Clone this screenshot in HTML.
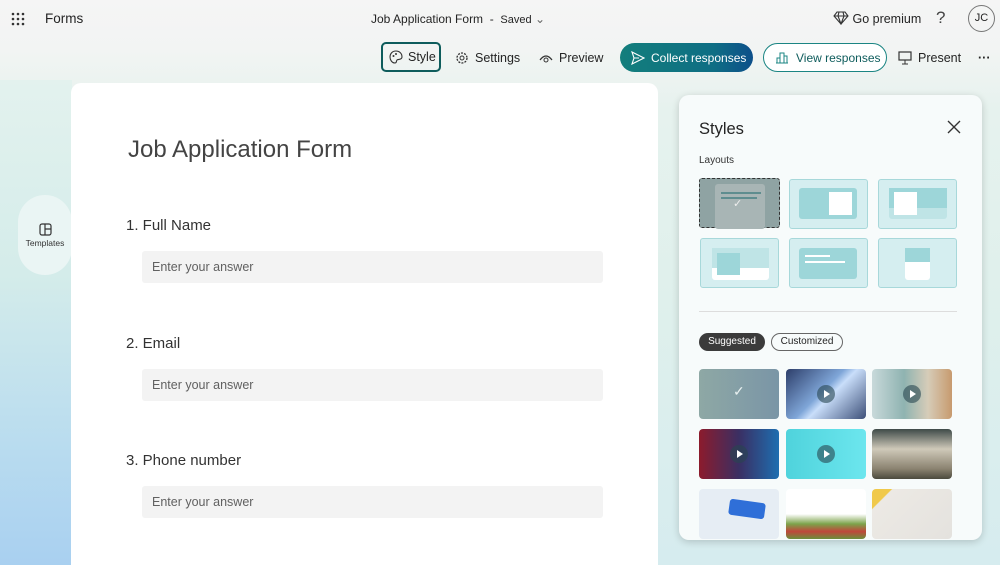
<!DOCTYPE html>
<html><head><style>
*{box-sizing:border-box;margin:0;padding:0}
html,body{width:1000px;height:565px;overflow:hidden}
body{font-family:"Liberation Sans",sans-serif;color:#242424;position:relative;
background:linear-gradient(180deg,#f5f5f5 0px,#f2f4f3 50px,#e6f2ee 110px,#dff0ec 300px,#d6ecef 565px);}
.bgl{position:absolute;left:0;top:80px;width:72px;height:485px;background:linear-gradient(180deg,#e3f2ee 0%,#d4ecea 40%,#b9dcef 75%,#a9d0f0 100%)}
.abs{position:absolute}
.btn{position:absolute;top:43px;height:29px;display:flex;align-items:center;font-size:12.5px;color:#242424;white-space:nowrap}
.card{position:absolute;left:71px;top:83px;width:587px;height:482px;background:#fff;border-radius:10px 10px 0 0}
.q{position:absolute;left:55px;font-size:15px;color:#333}
.in{position:absolute;left:71px;width:461px;height:32px;background:#f3f3f3;border-radius:3px;font-size:12.5px;color:#616161;padding:9px 10px}
.panel{position:absolute;left:679px;top:95px;width:303px;height:445px;background:#f7fbfb;border-radius:10px;box-shadow:0 2px 8px rgba(0,0,0,.18);overflow:hidden}
.lay{position:absolute;width:79px;height:50px;background:#d5eef0;border:1px solid #a7d8da;border-radius:3px}
.img{position:absolute;width:80px;height:50px;border-radius:4px}
.play{position:absolute;left:31px;top:16px;width:18px;height:18px;border-radius:50%;background:rgba(40,70,80,.6)}
.play:after{content:"";position:absolute;left:7px;top:5px;border-left:6px solid #fff;border-top:4px solid transparent;border-bottom:4px solid transparent}
</style></head><body>
<div class="bgl"></div>
<svg class="abs" style="left:11px;top:12px" width="14" height="14"><g fill="#333"><circle cx="2" cy="2" r="1.3"/><circle cx="7" cy="2" r="1.3"/><circle cx="12" cy="2" r="1.3"/><circle cx="2" cy="7" r="1.3"/><circle cx="7" cy="7" r="1.3"/><circle cx="12" cy="7" r="1.3"/><circle cx="2" cy="12" r="1.3"/><circle cx="7" cy="12" r="1.3"/><circle cx="12" cy="12" r="1.3"/></g></svg>
<div class="abs" style="left:45px;top:11px;font-size:13.5px">Forms</div>
<div class="abs" style="left:371px;top:12px;font-size:12px;white-space:nowrap">Job Application Form &nbsp;- &nbsp;<span style="font-size:11px">Saved</span> <span style="color:#666">&#8964;</span></div>
<div class="abs" style="left:833px;top:11px;font-size:12.5px;white-space:nowrap"><svg width="16" height="14" style="vertical-align:-2px"><path d="M4 1H12L15 5L8 13L1 5Z M1 5H15 M6 1L5 5L8 13L11 5L10 1" fill="none" stroke="#333" stroke-width="1.1"/></svg> Go premium</div>
<div class="abs" style="left:936px;top:8px;font-size:17px;color:#444">?</div>
<div class="abs" style="left:968px;top:5px;width:27px;height:27px;border:1px solid #777;border-radius:50%;font-size:11px;text-align:center;line-height:25px">JC</div>

<div class="btn" style="left:381px;top:42px;width:60px;height:30px;border:2.5px solid #0e5c5c;border-radius:5px;padding-left:6px"><svg width="14" height="14" style="margin-right:5px"><path d="M7 1C3 1 1 4 1 7C1 10 3 13 6 13C8 13 7 11 8 10C9 9 13 10 13 7C13 3 10 1 7 1Z" fill="none" stroke="#333" stroke-width="1.1"/><circle cx="4.5" cy="6" r="1" fill="#333"/><circle cx="7" cy="4" r="1" fill="#333"/></svg>Style</div>
<div class="btn" style="left:455px"><svg width="14" height="14" style="margin-right:6px"><circle cx="7" cy="7" r="5" fill="none" stroke="#333" stroke-width="1.3" stroke-dasharray="2 1.2"/><circle cx="7" cy="7" r="2" fill="none" stroke="#333"/></svg>Settings</div>
<div class="btn" style="left:539px"><svg width="14" height="12" style="margin-right:6px"><path d="M1 8Q7 0 13 8" fill="none" stroke="#333" stroke-width="1.2"/><circle cx="7" cy="8" r="2" fill="none" stroke="#333"/></svg>Preview</div>
<div class="btn" style="left:620px;width:133px;background:linear-gradient(90deg,#137e7c,#0e6e84 70%,#0d4f8a);border-radius:15px;color:#fff;padding-left:11px;font-size:12px"><svg width="14" height="14" style="margin-right:6px;flex:none"><path d="M1 1L13 7L1 13L3 7Z M3 7H8" fill="none" stroke="#fff" stroke-width="1.1"/></svg>Collect responses</div>
<div class="btn" style="left:763px;width:124px;border:1px solid #1b8583;border-radius:15px;color:#0e5c5c;padding-left:12px;background:#fff;font-size:12px"><svg width="13" height="12" style="margin-right:7px;flex:none"><path d="M1 11V6H4V11M4 11V1H8V11M8 11V4H11V11M0 11H12" fill="none" stroke="#1b8583"/></svg>View responses</div>
<div class="btn" style="left:898px"><svg width="14" height="14" style="margin-right:6px"><rect x="1" y="1" width="12" height="8" fill="none" stroke="#333" stroke-width="1.2"/><path d="M7 9V13M4 13H10" stroke="#333"/></svg>Present</div>
<div class="btn" style="left:978px;font-weight:bold">&middot;&middot;&middot;</div>

<div class="abs" style="left:18px;top:195px;width:54px;height:80px;border-radius:27px;background:#eaf5f4;font-size:8.5px;text-align:center;padding-top:28px;color:#333"><svg width="13" height="13"><rect x="1" y="1" width="11" height="11" rx="2" fill="none" stroke="#333" stroke-width="1.2"/><path d="M6 1V12M6 6H12" stroke="#333" stroke-width="1.2"/></svg><br>Templates</div>

<div class="card">
<div class="abs" style="left:57px;top:53px;font-size:24px;color:#444">Job Application Form</div>
<div class="q" style="top:134px">1. Full Name</div>
<div class="in" style="top:168px">Enter your answer</div>
<div class="q" style="top:252px">2. Email</div>
<div class="in" style="top:286px">Enter your answer</div>
<div class="q" style="top:369px">3. Phone number</div>
<div class="in" style="top:403px">Enter your answer</div>
</div>

<div class="panel">
<div class="abs" style="left:20px;top:25px;font-size:16.5px">Styles</div>
<svg class="abs" style="left:268px;top:25px" width="14" height="14"><path d="M1 1L13 13M13 1L1 13" stroke="#333" stroke-width="1.4"/></svg>
<div class="abs" style="left:20px;top:60px;font-size:10px;color:#333">Layouts</div>
<div class="lay" style="left:20px;top:83px;width:81px;background:#8fa3a3;border:1px dashed #333"><div class="abs" style="left:15px;top:5px;width:50px;height:45px;background:#a8b5b5;border-radius:3px"></div><div class="abs" style="left:21px;top:13px;width:40px;height:2px;background:#5f8d8f"></div><div class="abs" style="left:21px;top:18px;width:36px;height:2px;background:#5f8d8f"></div><div class="abs" style="left:33px;top:18px;color:#eee;font-size:11px">&#10003;</div></div>
<div class="lay" style="left:110px;top:84px"><div class="abs" style="left:9px;top:8px;width:58px;height:31px;background:#9dd6d9;border-radius:3px"></div><div class="abs" style="left:39px;top:12px;width:23px;height:23px;background:#fff"></div></div>
<div class="lay" style="left:199px;top:84px"><div class="abs" style="left:10px;top:8px;width:58px;height:31px;background:#bfe4e6;border-radius:3px"></div><div class="abs" style="left:10px;top:8px;width:58px;height:20px;background:#9dd6d9"></div><div class="abs" style="left:15px;top:12px;width:23px;height:23px;background:#fff"></div></div>
<div class="lay" style="left:21px;top:143px"><div class="abs" style="left:11px;top:9px;width:57px;height:32px;background:#fff;border-radius:3px"></div><div class="abs" style="left:11px;top:9px;width:57px;height:20px;background:#bfe4e6"></div><div class="abs" style="left:16px;top:14px;width:23px;height:22px;background:#9dd6d9"></div></div>
<div class="lay" style="left:110px;top:143px"><div class="abs" style="left:9px;top:9px;width:58px;height:31px;background:#9dd6d9;border-radius:3px"></div><div class="abs" style="left:15px;top:16px;width:25px;height:2px;background:#fff"></div><div class="abs" style="left:15px;top:22px;width:40px;height:2px;background:#fff"></div></div>
<div class="lay" style="left:199px;top:143px"><div class="abs" style="left:26px;top:9px;width:25px;height:32px;background:#fff;border-radius:3px"></div><div class="abs" style="left:26px;top:9px;width:25px;height:14px;background:#9dd6d9"></div></div>
<div class="abs" style="left:20px;top:216px;width:258px;height:1px;background:#ddd"></div>
<div class="abs" style="left:20px;top:238px;width:66px;height:18px;border-radius:9px;background:#3b3b3b;color:#fff;font-size:10px;text-align:center;line-height:18px">Suggested</div>
<div class="abs" style="left:92px;top:238px;width:72px;height:18px;border-radius:9px;border:1px solid #666;font-size:10px;text-align:center;line-height:16px">Customized</div>
<div class="img" style="left:20px;top:274px;background:linear-gradient(90deg,#8ea8a5,#7a95a6)"><div class="abs" style="left:34px;top:14px;color:#e8f0f0;font-size:14px">&#10003;</div></div>
<div class="img" style="left:107px;top:274px;background:linear-gradient(135deg,#2d3e6a,#7fa6d8 45%,#c9defa 55%,#3c4f78)"><div class="play"></div></div>
<div class="img" style="left:193px;top:274px;background:linear-gradient(90deg,#c8d9da,#8fb3b1 40%,#d6ccb8 70%,#c79a6e)"><div class="play"></div></div>
<div class="img" style="left:20px;top:334px;background:linear-gradient(90deg,#8c1b2c,#3a2f63 50%,#1e6eb0)"><div class="play"></div></div>
<div class="img" style="left:107px;top:334px;background:linear-gradient(90deg,#4fd3dc,#6ce6ee)"><div class="play"></div></div>
<div class="img" style="left:193px;top:334px;background:linear-gradient(180deg,#3e4a48,#cfc9b9 40%,#8a8270 80%,#4b4a3e)"></div>
<div class="img" style="left:20px;top:394px;background:#e6edf4"><div class="abs" style="left:30px;top:12px;width:36px;height:16px;background:#2f6fd8;border-radius:3px;transform:rotate(8deg)"></div></div>
<div class="img" style="left:107px;top:394px;background:linear-gradient(180deg,#fff 50%,#7ca34a 70%,#c0463a 85%,#6a8f3a)"></div>
<div class="img" style="left:193px;top:394px;background:linear-gradient(135deg,#f0c94a 0 15%,#ece9e4 16%,#e4e2de)"></div>
</div>
</body></html>
